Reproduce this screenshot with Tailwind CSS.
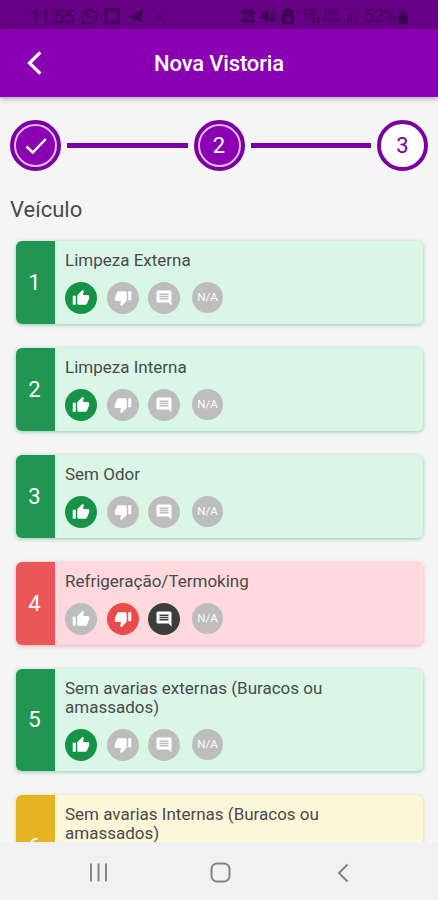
<!DOCTYPE html>
<html lang="pt-BR">

<head>
    <meta charset="UTF-8" />
    <meta name="viewport" content="width=device-width, initial-scale=1.0" />
    <title>Nova Vistoria</title>

    <!-- TailwindCSS -->
    <script src="https://cdn.jsdelivr.net/npm/@tailwindcss/browser@4"></script>
</head>

<body class="h-[900px] w-[438px] overflow-hidden bg-[#f5f5f5] font-[Roboto,sans-serif] text-[#4a4a4a]">
    <!-- Shared icons -->
    <svg class="hidden">
        <symbol id="thumb-up" viewBox="0 0 24 24"><path fill="currentColor" d="M1 21h4V9H1v12zm22-11c0-1.1-.9-2-2-2h-6.31l.95-4.57.03-.32c0-.41-.17-.79-.44-1.06L14.17 1 7.59 7.59C7.22 7.95 7 8.45 7 9v10c0 1.1.9 2 2 2h9c.83 0 1.54-.5 1.84-1.22l3.02-7.05c.09-.23.14-.47.14-.73v-2z" /></symbol>
        <symbol id="thumb-down" viewBox="0 0 24 24"><path fill="currentColor" d="M15 3H6c-.83 0-1.54.5-1.84 1.22l-3.02 7.05c-.09.23-.14.47-.14.73v2c0 1.1.9 2 2 2h6.31l-.95 4.57-.03.32c0 .41.17.79.44 1.06L9.83 23l6.59-6.59c.36-.36.58-.86.58-1.41V5c0-1.1-.9-2-2-2zm4 0v12h4V3h-4z" /></symbol>
        <symbol id="comment" viewBox="0 0 24 24"><path fill="currentColor" d="M21.99 4c0-1.1-.89-2-1.99-2H4c-1.1 0-2 .9-2 2v12c0 1.1.9 2 2 2h14l4 4-.01-18zM18 14H6v-2h12v2zm0-3H6V9h12v2zm0-3H6V6h12v2z" /></symbol>
    </svg>

    <div class="flex h-full flex-col">
        <!-- Status bar -->
        <div class="flex h-[29px] shrink-0 items-center bg-[#660084] pt-[3px] pl-[30px] text-[#3b0050]">
            <span class="w-[51px] text-[19px] leading-none tracking-[-0.7px]">11:55</span>
            <svg class="h-[17px] w-[17px]" viewBox="0 0 17 17" fill="none" stroke="currentColor" stroke-width="1.3"><path d="M1 16l1.2-4A7 7 0 1 1 5 14.8z" /><path d="M5.5 4.5c-1 3 3 7 6 6.500l.5-1.500-2-1-1 1C8 9 7.200 8 7 7l.8-.8-.8-2z" fill="currentColor" stroke="none" /></svg>
            <svg class="ml-[6px] h-[16px] w-[16px]" viewBox="0 0 16 16" fill="none" stroke="currentColor"><rect x="1.500" y="1.500" width="13" height="13" stroke-width="2.500" /></svg>
            <svg class="ml-[8px] h-[15px] w-[16px]" viewBox="0 0 16 15" fill="currentColor"><path d="M0 8L15 1l-2.500 12.500-4-3L6.500 13 5 9l7-5-8.500 4.800z" /></svg>
            <span class="ml-[13px] h-[5px] w-[5px] rounded-full bg-current"></span>
            <svg class="ml-[79px] h-[16px] w-[14px]" viewBox="0 0 14 16"><path d="M0 4l3-3 2 1h4l2-1 3 3-1 2v6l1 2-2 1-2-1H4l-2 1-1-2 1-2V6z" fill="currentColor" /><circle cx="7" cy="8.500" r="3.500" fill="#660084" /><path d="M7 6v3h2" fill="none" stroke="currentColor" stroke-width="1.200" /></svg>
            <svg class="ml-[6px] h-[15px] w-[15px]" viewBox="0 0 15 15"><path d="M0 5h3l5-4v12L3 10H0z" fill="currentColor" /><path d="M1 1l11 12M11 4v7M14 1v12" stroke="currentColor" stroke-width="1.300" /></svg>
            <svg class="ml-[6px] h-[15px] w-[12px]" viewBox="0 0 12 15"><path d="M2 0h8l2 4v11H0V4z" fill="currentColor" /><path d="M3 4h6M4 8v4h4V8z" fill="#660084" stroke="#660084" /></svg>
            <svg class="ml-[7px] h-[16px] w-[19px]" viewBox="0 0 19 16" fill="none" stroke="currentColor" stroke-width="1.500"><path d="M1 5c5-4.500 11-4.500 15 0M3.500 8c3-3 7-3 10 0M6 11c2-2 3-2 5 0M13 9v6M11 13l2 2M17 15V9M17 9l2 2" /></svg>
            <span class="ml-[3px] flex w-[18px] flex-col text-[8px] leading-[8px] font-medium"><span>Vo))</span><span>LTE2</span></span>
            <svg class="ml-[3px] h-[14px] w-[15px]" viewBox="0 0 15 14" stroke="currentColor" stroke-width="1.300"><path d="M1 11v3M4 8v6M7 5v9" /><path d="M10 3v11M13 0v14" opacity=".4" /></svg>
            <span class="ml-[5px] text-[18px] leading-none tracking-[-0.4px]">52%</span>
            <svg class="ml-[2px] h-[15px] w-[10px]" viewBox="0 0 10 15"><path d="M3 0h4v2h2v4H1V2h2z" fill="currentColor" opacity=".5" /><path d="M0 6h10v9H0z" fill="currentColor" /></svg>
        </div>

        <!-- App bar -->
        <header class="relative z-10 grid h-[68px] shrink-0 grid-cols-[72px_1fr_72px] items-center bg-[#8b00b2] text-white shadow-[0_2px_5px_rgba(0,0,0,0.3)]">
            <svg class="ml-[26px] h-[26px] w-[17px]" viewBox="0 0 17 26" fill="none" stroke="currentColor" stroke-width="3.300"><path d="M14.300 2.300L3.500 13l10.800 10.700" /></svg>
            <h1 class="pt-px text-center text-[22px] font-medium tracking-[-0.15px]">Nova Vistoria</h1>
        </header>

        <main class="min-h-0 flex-1 overflow-hidden">
            <!-- Steps -->
            <div class="flex items-center px-[10px] pt-[23px] text-[22px]">
                <div class="flex h-[51px] w-[51px] items-center justify-center rounded-full border-4 border-[#7900a1] bg-[#8b00b2]">
                    <div class="flex h-[43px] w-[43px] shrink-0 items-center justify-center rounded-full border-2 border-[#e0b8ec]">
                        <svg class="h-[18px] w-[22px]" viewBox="0 0 22 18" fill="none" stroke="white" stroke-width="2.500"><path d="M1.500 9.500l6.300 6L20.800 2" /></svg>
                    </div>
                </div>
                <div class="mx-[6px] h-[5px] flex-1 bg-[#7b00a3]"></div>
                <div class="flex h-[51px] w-[51px] items-center justify-center rounded-full border-4 border-[#7900a1] bg-[#8b00b2] text-white">
                    <div class="flex h-[43px] w-[43px] shrink-0 items-center justify-center rounded-full border-2 border-[#e0b8ec]">2</div>
                </div>
                <div class="mx-[6px] h-[5px] flex-1 bg-[#7b00a3]"></div>
                <div class="flex h-[51px] w-[51px] items-center justify-center rounded-full border-4 border-[#7b00a3] bg-white text-[#7b00a3]">3</div>
            </div>

            <h2 class="mt-[26px] pl-[10px] text-[22px] leading-[26px]">Veículo</h2>

            <!-- Checklist -->
            <div class="mt-[18px] flex flex-col gap-[24.5px] pr-[15px] pl-4 text-[17px] leading-[19px]">
                <div class="flex overflow-hidden rounded-[6px] bg-[#d9f6e7] shadow-[0_1px_4px_#8fc9ab]">
                    <div class="flex w-[39px] items-center justify-center bg-[#219653] pr-[2px] text-[22px] text-white">1</div>
                    <div class="px-[10px] pt-[9.5px] pb-[10px]">
                        <p>Limpeza Externa</p>
                        <div class="mt-3 flex items-center text-white">
                            <span class="flex h-8 w-8 items-center justify-center rounded-full bg-[#159447]"><svg class="h-[18px] w-[18px]"><use href="#thumb-up" /></svg></span>
                            <span class="ml-[9.5px] flex h-8 w-8 items-center justify-center rounded-full bg-[#bdbdbd]"><svg class="h-[18px] w-[18px]"><use href="#thumb-down" /></svg></span>
                            <span class="ml-[9.5px] flex h-8 w-8 items-center justify-center rounded-full bg-[#bdbdbd]"><svg class="h-[18px] w-[18px]"><use href="#comment" /></svg></span>
                            <span class="ml-3 flex h-[31px] w-[31px] items-center justify-center rounded-full bg-[#bdbdbd] text-[11.5px]">N/A</span>
                        </div>
                    </div>
                </div>

                <div class="flex overflow-hidden rounded-[6px] bg-[#d9f6e7] shadow-[0_1px_4px_#8fc9ab]">
                    <div class="flex w-[39px] items-center justify-center bg-[#219653] pr-[2px] text-[22px] text-white">2</div>
                    <div class="px-[10px] pt-[9.5px] pb-[10px]">
                        <p>Limpeza Interna</p>
                        <div class="mt-3 flex items-center text-white">
                            <span class="flex h-8 w-8 items-center justify-center rounded-full bg-[#159447]"><svg class="h-[18px] w-[18px]"><use href="#thumb-up" /></svg></span>
                            <span class="ml-[9.5px] flex h-8 w-8 items-center justify-center rounded-full bg-[#bdbdbd]"><svg class="h-[18px] w-[18px]"><use href="#thumb-down" /></svg></span>
                            <span class="ml-[9.5px] flex h-8 w-8 items-center justify-center rounded-full bg-[#bdbdbd]"><svg class="h-[18px] w-[18px]"><use href="#comment" /></svg></span>
                            <span class="ml-3 flex h-[31px] w-[31px] items-center justify-center rounded-full bg-[#bdbdbd] text-[11.5px]">N/A</span>
                        </div>
                    </div>
                </div>

                <div class="flex overflow-hidden rounded-[6px] bg-[#d9f6e7] shadow-[0_1px_4px_#8fc9ab]">
                    <div class="flex w-[39px] items-center justify-center bg-[#219653] pr-[2px] text-[22px] text-white">3</div>
                    <div class="px-[10px] pt-[9.5px] pb-[10px]">
                        <p>Sem Odor</p>
                        <div class="mt-3 flex items-center text-white">
                            <span class="flex h-8 w-8 items-center justify-center rounded-full bg-[#159447]"><svg class="h-[18px] w-[18px]"><use href="#thumb-up" /></svg></span>
                            <span class="ml-[9.5px] flex h-8 w-8 items-center justify-center rounded-full bg-[#bdbdbd]"><svg class="h-[18px] w-[18px]"><use href="#thumb-down" /></svg></span>
                            <span class="ml-[9.5px] flex h-8 w-8 items-center justify-center rounded-full bg-[#bdbdbd]"><svg class="h-[18px] w-[18px]"><use href="#comment" /></svg></span>
                            <span class="ml-3 flex h-[31px] w-[31px] items-center justify-center rounded-full bg-[#bdbdbd] text-[11.5px]">N/A</span>
                        </div>
                    </div>
                </div>

                <div class="flex overflow-hidden rounded-[6px] bg-[#ffd9dd] shadow-[0_1px_4px_#eba9ab]">
                    <div class="flex w-[39px] items-center justify-center bg-[#eb5757] pr-[2px] text-[22px] text-white">4</div>
                    <div class="px-[10px] pt-[9.5px] pb-[10px]">
                        <p>Refrigeração/Termoking</p>
                        <div class="mt-3 flex items-center text-white">
                            <span class="flex h-8 w-8 items-center justify-center rounded-full bg-[#bdbdbd]"><svg class="h-[18px] w-[18px]"><use href="#thumb-up" /></svg></span>
                            <span class="ml-[9.5px] flex h-8 w-8 items-center justify-center rounded-full bg-[#eb4b4b]"><svg class="h-[18px] w-[18px]"><use href="#thumb-down" /></svg></span>
                            <span class="ml-[9.5px] flex h-8 w-8 items-center justify-center rounded-full bg-[#3d3d3d]"><svg class="h-[18px] w-[18px]"><use href="#comment" /></svg></span>
                            <span class="ml-3 flex h-[31px] w-[31px] items-center justify-center rounded-full bg-[#bdbdbd] text-[11.5px]">N/A</span>
                        </div>
                    </div>
                </div>

                <div class="flex overflow-hidden rounded-[6px] bg-[#d9f6e7] shadow-[0_1px_4px_#8fc9ab]">
                    <div class="flex w-[39px] items-center justify-center bg-[#219653] pr-[2px] text-[22px] text-white">5</div>
                    <div class="px-[10px] pt-[9.5px] pb-[10px]">
                        <p>Sem avarias externas (Buracos ou<br />amassados)</p>
                        <div class="mt-3 flex items-center text-white">
                            <span class="flex h-8 w-8 items-center justify-center rounded-full bg-[#159447]"><svg class="h-[18px] w-[18px]"><use href="#thumb-up" /></svg></span>
                            <span class="ml-[9.5px] flex h-8 w-8 items-center justify-center rounded-full bg-[#bdbdbd]"><svg class="h-[18px] w-[18px]"><use href="#thumb-down" /></svg></span>
                            <span class="ml-[9.5px] flex h-8 w-8 items-center justify-center rounded-full bg-[#bdbdbd]"><svg class="h-[18px] w-[18px]"><use href="#comment" /></svg></span>
                            <span class="ml-3 flex h-[31px] w-[31px] items-center justify-center rounded-full bg-[#bdbdbd] text-[11.5px]">N/A</span>
                        </div>
                    </div>
                </div>

                <!-- Cut off by the navigation bar -->
                <div class="flex h-[101.5px] overflow-hidden rounded-[6px] bg-[#fdf6d8] shadow-[0_1px_4px_#e3d28f]">
                    <div class="flex w-[39px] items-center justify-center bg-[#e6b422] pt-[2px] pr-[2px] text-[22px] text-white">6</div>
                    <div class="px-[10px] pt-[10px] pb-[10px]">
                        <p>Sem avarias Internas (Buracos ou<br />amassados)</p>
                    </div>
                </div>
            </div>
        </main>

        <!-- Android navigation -->
        <nav class="flex h-[58px] shrink-0 items-center bg-[#f1f1f1] pt-[3px] pl-[89px] text-[#848484]">
            <svg class="h-[19px] w-[19px]" viewBox="0 0 19 19" stroke="currentColor" stroke-width="2"><path d="M2 .5v18M9.500 .5v18M17 .5v18" /></svg>
            <svg class="ml-[102px] h-[21px] w-[21px]" viewBox="0 0 21 21" fill="none" stroke="currentColor" stroke-width="2"><rect x="1.500" y="1.500" width="18" height="18" rx="5.500" /></svg>
            <svg class="ml-[106px] h-[20px] w-[12px]" viewBox="0 0 12 20" fill="none" stroke="currentColor" stroke-width="2"><path d="M10.500 1.500L2 10l8.500 8.500" /></svg>
        </nav>
    </div>
</body>

</html>
